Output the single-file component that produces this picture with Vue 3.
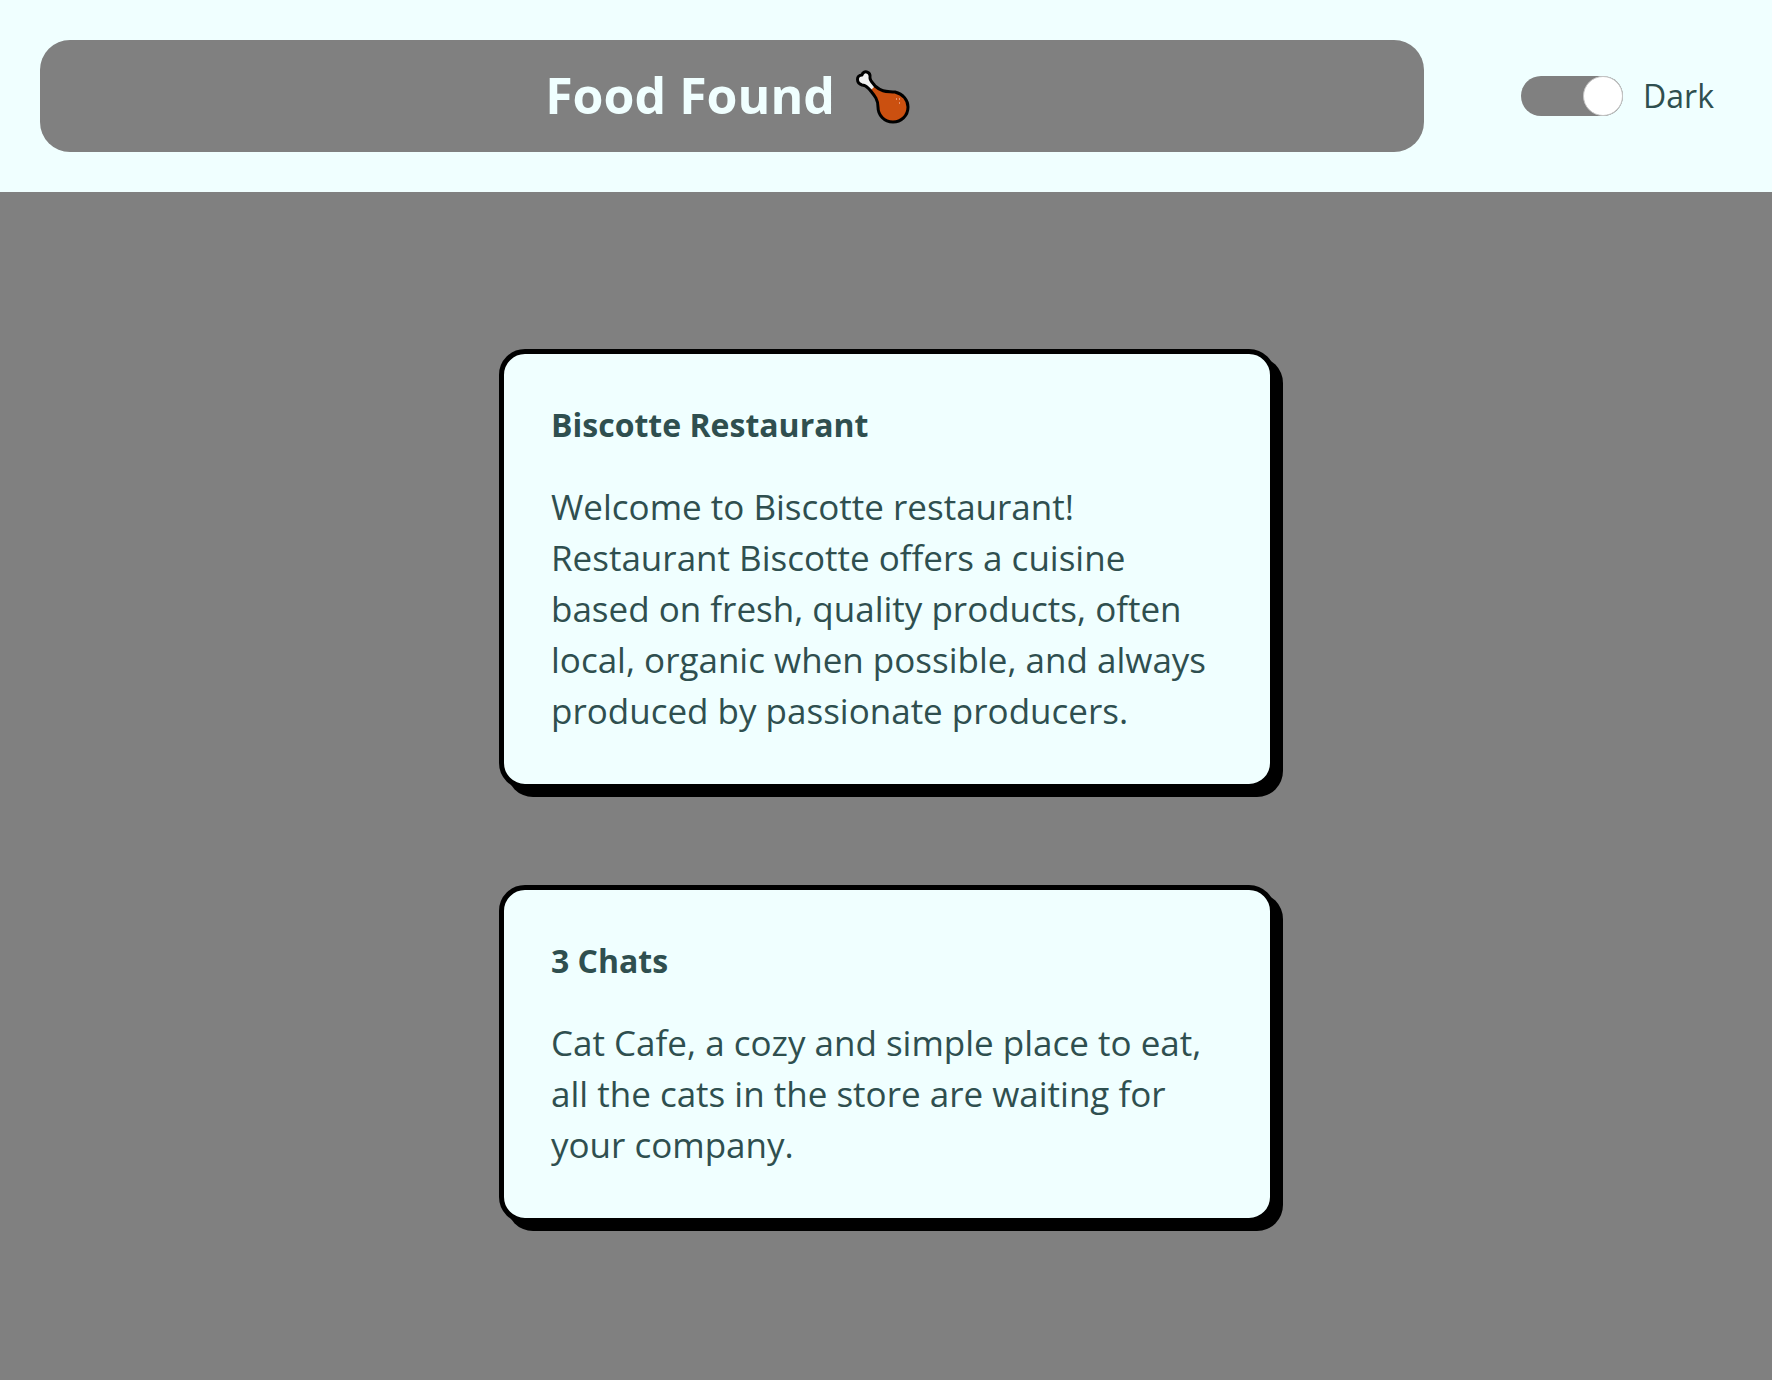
<script setup>
import { ref } from 'vue'

const dark = ref(true)
const restaurants = [
  {
    name: 'Biscotte Restaurant',
    description:
      'Welcome to Biscotte restaurant! Restaurant Biscotte offers a cuisine based on fresh, quality products, often local, organic when possible, and always produced by passionate producers.',
  },
  {
    name: '3 Chats',
    description:
      'Cat Cafe, a cozy and simple place to eat, all the cats in the store are waiting for your company.',
  },
]
</script>

<template>
  <div class="page">
    <header class="header">
      <h1 class="brand">
        <span>Food Found</span>
        <svg class="drumstick" viewBox="0 0 70 70" aria-hidden="true">
          <path
            d="M24 27 L14 24 C8 23 7 16 13 15 C14 10 22 11 22 17 L22 19 L27 26 C35 33 45 29 53 35 C63 43 60 62 44 62 C34 62 29 54 29 46 C29 39 25 34 21 29 Z"
            fill="#cb5010"
          />
          <path
            d="M13 25 C7 23 7 15 13 15 C14 10 22 11 21 18 C21 21 24 23 26 26 L21 31 C18 28 17 25 13 25Z"
            fill="#f2f2f2"
          />
          <path
            d="M13 25 C7 23 7 15 13 15 C14 10 22 11 21 18 C21 21 24 23 26 26 C34 33 39 31 46 32 C54 34 59 40 59 47 C59 56 52 62 44 62 C35 62 29 55 29 47 C29 39 25 35 21 30 C18 27 17 25 13 25Z"
            fill="none"
            stroke="#000"
            stroke-width="3"
            stroke-linejoin="round"
          />
          <path d="M47 39h1M50 39h1M50 43h1" stroke="#f0a890" stroke-width="1.3" />
        </svg>
      </h1>
      <label class="theme">
        <input v-model="dark" class="switch" type="checkbox" />
        <span>Dark</span>
      </label>
    </header>
    <main class="list">
      <article v-for="r in restaurants" :key="r.name" class="card">
        <h2 class="name">{{ r.name }}</h2>
        <p class="description">{{ r.description }}</p>
      </article>
    </main>
  </div>
</template>

<style>
body {
  margin: 0;
  background: #808080;
}
</style>

<style scoped>
.page {
  color: darkslategray;
  font-family: "Open Sans", "Noto Sans", sans-serif;
}
.header {
  display: flex;
  align-items: center;
  justify-content: space-between;
  padding: 40px 58px 40px 40px;
  background: azure;
}
.brand {
  box-sizing: border-box;
  display: flex;
  flex: 1;
  align-items: center;
  justify-content: center;
  gap: 14px;
  height: 112px;
  margin: 0 97px 0 0;
  padding-bottom: 2px;
  border-radius: 30px;
  background: #808080;
  color: azure;
  font-size: 50px;
  font-weight: 700;
  line-height: 72px;
}
.drumstick {
  width: 70px;
  height: 70px;
}
.theme {
  display: flex;
  align-items: center;
  gap: 20px;
  font-size: 32px;
  line-height: 48px;
}
.switch {
  appearance: none;
  width: 102px;
  height: 40px;
  margin: 0;
  border-radius: 20px;
  background: #808080;
}
.switch::before {
  content: "";
  display: block;
  box-sizing: border-box;
  width: 40px;
  height: 40px;
  border: 1px solid #c4c4c4;
  border-radius: 50%;
  background: #fff;
}
.switch:checked::before {
  margin-left: auto;
}
.list {
  display: flex;
  flex-direction: column;
  align-items: center;
  gap: 96px;
  padding: 157px 39px 140px 41px;
}
.card {
  box-sizing: border-box;
  width: 100%;
  max-width: 776px;
  padding: 48px 47px;
  border: 5px solid #000;
  border-radius: 26px;
  background: azure;
  box-shadow: 8px 8px 0 #000;
}
.name {
  margin: 0 0 33px;
  font-size: 32px;
  font-weight: 700;
  line-height: 46px;
}
.description {
  margin: 0;
  font-size: 35px;
  line-height: 51px;
}
</style>
